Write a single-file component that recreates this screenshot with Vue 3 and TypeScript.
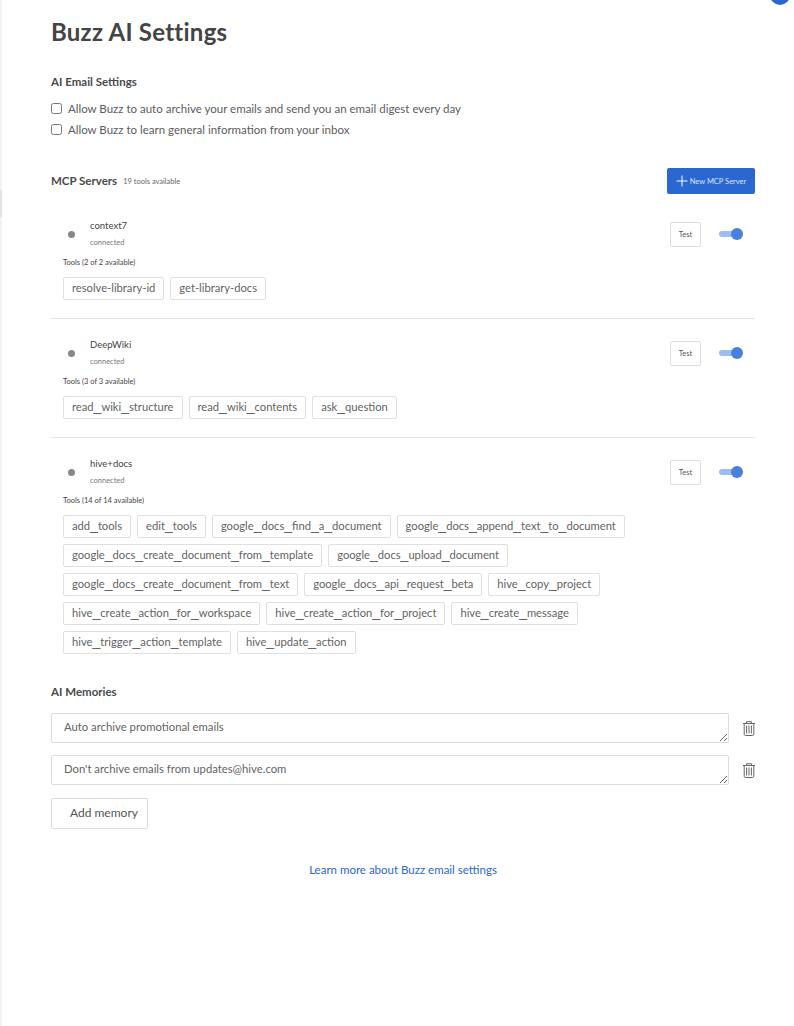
<template>
  <div class="page">
    <span class="edge"></span>
    <span class="edge-tab"></span>
    <span class="avatar"></span>

    <h1 class="title">Buzz AI Settings</h1>

    <section class="email">
      <h2 class="heading">AI Email Settings</h2>
      <label v-for="opt in emailOptions" :key="opt" class="check">
        <input type="checkbox" />
        <span>{{ opt }}</span>
      </label>
    </section>

    <section class="mcp">
      <header class="mcp-head">
        <h2 class="heading">MCP Servers</h2>
        <span class="count">19 tools available</span>
        <button class="new-btn">
          <svg width="12" height="12" viewBox="0 0 12 12" fill="none" stroke="#fff" stroke-width="1">
            <path d="M6 0.5V11.5M0.5 6H11.5" />
          </svg>
          New MCP Server
        </button>
      </header>

      <div v-for="server in servers" :key="server.name" class="server">
        <div class="server-top">
          <span class="dot"></span>
          <div class="server-info">
            <div class="server-name">{{ server.name }}</div>
            <div class="server-status">connected</div>
          </div>
          <button class="test-btn">Test</button>
          <span class="toggle"><span class="thumb"></span></span>
        </div>
        <div class="tools-label">Tools ({{ server.tools.length }} of {{ server.tools.length }} available)</div>
        <div class="tags">
          <span v-for="tool in server.tools" :key="tool" class="tag">
            <span>
              <template v-for="(part, i) in tool.split('_')" :key="i"><span v-if="i" class="us">_</span>{{ part }}</template>
            </span>
          </span>
        </div>
      </div>
    </section>

    <section class="memories">
      <h2 class="heading">AI Memories</h2>
      <div v-for="m in memories" :key="m" class="memory">
        <textarea class="memory-input" :value="m"></textarea>
        <svg class="trash" width="12" height="15" viewBox="0 0 12 15" fill="none" stroke="#666" stroke-width="1">
          <path d="M0 2.5H12" />
          <path d="M3.5 2.5V0.7H8.5V2.5" />
          <path d="M1.2 2.5V13.2C1.2 14 1.7 14.5 2.4 14.5H9.6C10.3 14.5 10.8 14 10.8 13.2V2.5" />
          <path d="M3.6 4.5V12.5M6 4.5V12.5M8.4 4.5V12.5" />
        </svg>
      </div>
      <button class="add-btn">Add memory</button>
    </section>

    <a class="learn" href="#">Learn more about Buzz email settings</a>
  </div>
</template>

<script setup lang="ts">
interface Server {
  name: string;
  tools: string[];
}

const emailOptions = [
  "Allow Buzz to auto archive your emails and send you an email digest every day",
  "Allow Buzz to learn general information from your inbox",
];

const servers: Server[] = [
  { name: "context7", tools: ["resolve-library-id", "get-library-docs"] },
  { name: "DeepWiki", tools: ["read_wiki_structure", "read_wiki_contents", "ask_question"] },
  {
    name: "hive+docs",
    tools: [
      "add_tools",
      "edit_tools",
      "google_docs_find_a_document",
      "google_docs_append_text_to_document",
      "google_docs_create_document_from_template",
      "google_docs_upload_document",
      "google_docs_create_document_from_text",
      "google_docs_api_request_beta",
      "hive_copy_project",
      "hive_create_action_for_workspace",
      "hive_create_action_for_project",
      "hive_create_message",
      "hive_trigger_action_template",
      "hive_update_action",
    ],
  },
];

const memories = ["Auto archive promotional emails", "Don't archive emails from updates@hive.com"];
</script>

<style>
html,
body {
  background: #fff;
}
</style>

<style scoped>
.page {
  position: relative;
  box-sizing: border-box;
  width: 794px;
  height: 1026px;
  overflow: hidden;
  padding: 17px 39px 0 51px;
  font-family: "Lato", "Open Sans", sans-serif;
  color: #555;
}

.edge {
  position: absolute;
  left: 0;
  top: 0;
  bottom: 0;
  width: 2px;
  background: #f2f2f2;
}

.edge-tab {
  position: absolute;
  left: 0;
  top: 190px;
  width: 2px;
  height: 27px;
  background: #e4e4e4;
}

.avatar {
  position: absolute;
  left: 770px;
  top: -15px;
  width: 20px;
  height: 20px;
  border-radius: 50%;
  background: #2a67d0;
}

.title {
  margin: 0;
  font-size: 24px;
  line-height: 29px;
  font-weight: 700;
  letter-spacing: 0.25px;
  color: #444;
}

.heading {
  margin: 0;
  font-size: 11.5px;
  line-height: 14px;
  font-weight: 700;
  color: #4a4a4a;
}

.email {
  margin-top: 29px;
  display: flex;
  flex-direction: column;
}

.email .heading {
  margin-bottom: 9px;
}

.check {
  display: flex;
  align-items: center;
  gap: 6px;
  height: 21px;
  font-size: 11.5px;
  color: #5c5c5c;
}

.check input {
  margin: 0;
  width: 11px;
  height: 11px;
}

.mcp {
  margin-top: 28px;
}

.mcp-head {
  display: flex;
  align-items: center;
  height: 26px;
  margin-bottom: 6px;
}

.count {
  margin-left: 6px;
  font-size: 7.5px;
  color: #666;
}

.new-btn {
  margin-left: auto;
  width: 88px;
  height: 26px;
  display: flex;
  align-items: center;
  justify-content: center;
  gap: 2px;
  padding: 0;
  border: 0;
  border-radius: 2px;
  background: #2a67d0;
  color: #dbe6f8;
  font-family: inherit;
  font-size: 7.5px;
}

.server {
  padding: 14px 0 18px 12px;
  border-bottom: 1px solid #e8e8e8;
}

.server:last-child {
  border-bottom: 0;
}

.server-top {
  display: flex;
  align-items: center;
  height: 40px;
}

.dot {
  width: 7px;
  height: 7px;
  margin-left: 5px;
  border-radius: 50%;
  background: #888;
}

.server-info {
  margin-left: 15px;
  flex: 1;
}

.server-name {
  font-size: 9.5px;
  line-height: 12px;
  color: #444;
}

.server-status {
  margin-top: 6px;
  font-size: 7.5px;
  line-height: 10px;
  color: #777;
}

.test-btn {
  box-sizing: border-box;
  width: 31px;
  height: 25px;
  padding: 0;
  border: 1px solid #dedede;
  border-radius: 2px;
  background: #fff;
  color: #555;
  font-family: inherit;
  font-size: 7.5px;
}

.toggle {
  position: relative;
  width: 18px;
  height: 6px;
  margin: 0 18px;
  border-radius: 3px;
  background: #9dbcef;
}

.thumb {
  position: absolute;
  right: -6px;
  top: -3px;
  width: 12px;
  height: 12px;
  border-radius: 50%;
  background: #4a80dd;
}

.tools-label {
  margin-top: 4px;
  font-size: 7.5px;
  line-height: 10px;
  color: #444;
}

.tags {
  display: flex;
  flex-wrap: wrap;
  gap: 6px;
  max-width: 640px;
  margin-top: 9px;
}

.tag {
  box-sizing: border-box;
  height: 23px;
  padding: 0 8px 2px;
  display: flex;
  align-items: center;
  border: 1px solid #e0e0e0;
  border-radius: 2px;
  font-size: 11.2px;
  line-height: 14px;
  color: #636363;
}

/* Lato's underscore is short, the reference runs wider */
.us {
  font-family: "Liberation Sans", sans-serif;
  font-size: 14px;
  line-height: 1;
}

.memories {
  margin-top: 13px;
}

.memories .heading {
  margin-bottom: 14px;
}

.memory {
  display: flex;
  align-items: center;
  gap: 14px;
  margin-bottom: 12px;
}

.memory-input {
  box-sizing: border-box;
  width: 678px;
  height: 30px;
  padding: 6px 12px;
  border: 1px solid #dcdcdc;
  border-radius: 2px;
  font-family: inherit;
  font-size: 11.3px;
  line-height: 14px;
  color: #636363;
  outline: none;
}

.trash {
  flex: none;
}

.add-btn {
  box-sizing: border-box;
  width: 97px;
  height: 31px;
  margin-top: 1px;
  padding: 0 0 2px 18px;
  border: 1px solid #dcdcdc;
  border-radius: 2px;
  background: #fff;
  color: #555;
  font-family: inherit;
  font-size: 12px;
  text-align: left;
}

.learn {
  display: block;
  margin-top: 34px;
  text-align: center;
  font-size: 11.5px;
  line-height: 14px;
  color: #2a67d0;
  text-decoration: none;
}
</style>
